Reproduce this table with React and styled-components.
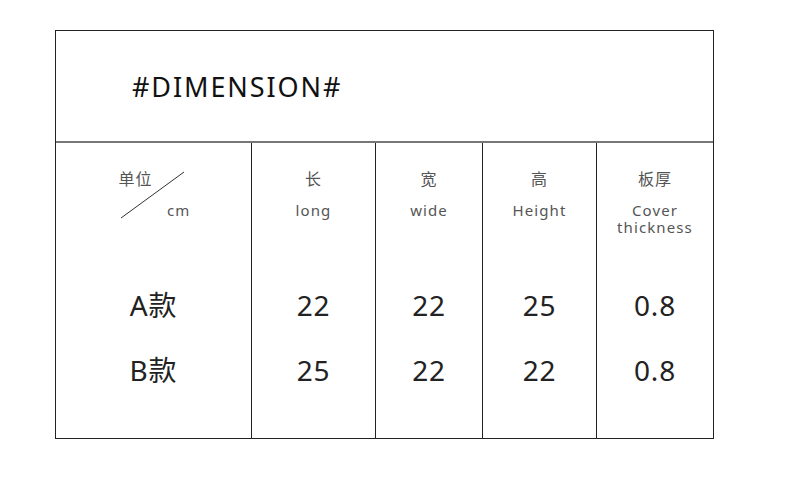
import React from 'react';
import styled, { createGlobalStyle } from 'styled-components';

const GlobalStyle = createGlobalStyle`
  body {
    margin: 0;
    background: #fff;
    font-family: "Noto Sans", "Noto Sans CJK SC", sans-serif;
  }
`;

const columns = [
  { cn: '长', en: ['long'], values: ['22', '25'] },
  { cn: '宽', en: ['wide'], values: ['22', '22'] },
  { cn: '高', en: ['Height'], values: ['25', '22'] },
  { cn: '板厚', en: ['Cover', 'thickness'], values: ['0.8', '0.8'] },
];

const rows = ['A款', 'B款'];

const App = () => {
  return (
    <>
      <GlobalStyle />
      <Table>
        <Header>#DIMENSION#</Header>
        <Body>
          <Column>
            <LabelArea>
              <UnitBox>
                <Slash viewBox="0 0 74 52">
                  <line x1="4" y1="49" x2="67" y2="3" stroke="#333" strokeWidth="1" />
                </Slash>
                <UnitTop>单位</UnitTop>
                <UnitBottom>cm</UnitBottom>
              </UnitBox>
            </LabelArea>
            {rows.map((r) => (
              <Value key={r}>{r}</Value>
            ))}
          </Column>
          {columns.map((c) => (
            <Column key={c.cn} $divider>
              <LabelArea>
                <CnLabel>{c.cn}</CnLabel>
                <EnLabel>
                  {c.en.map((line) => (
                    <div key={line}>{line}</div>
                  ))}
                </EnLabel>
              </LabelArea>
              {c.values.map((v, i) => (
                <Value key={i}>{v}</Value>
              ))}
            </Column>
          ))}
        </Body>
      </Table>
    </>
  );
};

export default App;

const Table = styled.div`
  margin: 30px 0 0 55px;
  width: 657px;
  border: 1px solid #222;
`;

const Header = styled.div`
  height: 110px;
  border-bottom: 2px solid #777;
  display: flex;
  align-items: center;
  padding-left: 76px;
  font-size: 27px;
  letter-spacing: 1.9px;
  color: #111;
`;

const Body = styled.div`
  display: grid;
  grid-template-columns: 195px 124px 107px 114px 117px;
  height: 295px;
`;

const Column = styled.div`
  display: flex;
  flex-direction: column;
  align-items: center;
  padding-top: 26px;
  border-left: ${(p) => (p.$divider ? '1px solid #222' : 'none')};
`;

const LabelArea = styled.div`
  height: 116px;
  display: flex;
  flex-direction: column;
  align-items: center;
`;

const CnLabel = styled.div`
  font-size: 16px;
  line-height: 20px;
  letter-spacing: 1px;
  color: #555;
`;

const EnLabel = styled.div`
  margin-top: 13px;
  font-size: 15px;
  line-height: 17px;
  color: #555;
  text-align: center;
  letter-spacing: 1.1px;
`;

const UnitBox = styled.div`
  position: relative;
  width: 74px;
  height: 52px;
  display: flex;
  flex-direction: column;
  justify-content: space-between;
`;

const Slash = styled.svg`
  position: absolute;
  left: 0;
  top: 0;
  width: 74px;
  height: 52px;
`;

const UnitTop = styled.div`
  align-self: flex-start;
  padding-left: 2px;
  font-size: 16px;
  line-height: 20px;
  letter-spacing: 1px;
  color: #555;
`;

const UnitBottom = styled.div`
  align-self: flex-end;
  font-size: 15px;
  line-height: 17px;
  letter-spacing: 1.1px;
  color: #555;
  transform: translateY(-2px);
`;

const Value = styled.div`
  font-size: 28px;
  line-height: 40px;
  color: #222;
  letter-spacing: 0.8px;
  & + & {
    margin-top: 25px;
  }
`;
